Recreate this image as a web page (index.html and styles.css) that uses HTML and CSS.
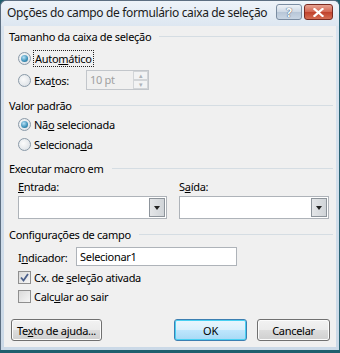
FILE: index.html
```html
<!DOCTYPE html>
<html lang="pt">
<head>
  <meta charset="UTF-8" />
  <title>Opções do campo de formulário caixa de seleção</title>
  <link rel="stylesheet" href="styles.css">
</head>
<body>

  <div class="window">
    <div class="titlebar">
      <span class="title">Opções do campo de formulário caixa de seleção</span>
      <div class="caption">
        <span class="cap-btn help">?</span>
        <span class="cap-btn close">
          <svg width="11" height="9" viewBox="0 0 11 9"><path d="M1.5 1 L9.5 8 M9.5 1 L1.5 8" stroke="#fff" stroke-width="2.2" stroke-linecap="square"/></svg>
        </span>
      </div>
    </div>

    <div class="client">
      <div class="group-head h1"><span>Tamanho da caixa de seleção</span><i></i></div>
      <div class="row opt r1"><span class="radio on"></span><span class="focus">Auto<u>m</u>ático</span></div>
      <div class="row opt r2">
        <span class="radio"></span><span class="lbl-exatos">Exa<u>t</u>os:</span>
        <div class="spin"><span class="spin-val">10 pt</span><div class="spin-btns"><b>&#9652;</b><b>&#9662;</b></div></div>
      </div>

      <div class="group-head h2"><span>Valor padrão</span><i></i></div>
      <div class="row opt r3"><span class="radio on"></span><span>Nã<u>o</u> selecionada</span></div>
      <div class="row opt r4"><span class="radio"></span><span>Seleciona<u>d</u>a</span></div>

      <div class="group-head h3"><span>Executar macro em</span><i></i></div>
      <div class="macro">
        <div class="macro-col entrada">
          <span class="small-lbl"><u>E</u>ntrada:</span>
          <div class="combo"><span class="combo-arrow"></span></div>
        </div>
        <div class="macro-col saida">
          <span class="small-lbl">S<u>a</u>ída:</span>
          <div class="combo"><span class="combo-arrow"></span></div>
        </div>
      </div>

      <div class="group-head h4"><span>Configurações de campo</span><i></i></div>
      <div class="row indic"><span class="indic-lbl">I<u>n</u>dicador:</span><div class="textbox">Selecionar1</div></div>
      <div class="row opt c1"><span class="check on">
        <svg width="9" height="9" viewBox="0 0 9 9"><path d="M1 4.5 L3.5 7.5 L8 1" fill="none" stroke="#4a5f8a" stroke-width="1.8"/></svg>
      </span><span>Cx. de <u>s</u>eleção ativada</span></div>
      <div class="row opt c2"><span class="check"></span><span>Calc<u>u</u>lar ao sair</span></div>

      <div class="buttons">
        <button class="btn help-text">Te<u>x</u>to de ajuda...</button>
        <div class="btn-right">
          <button class="btn ok">OK</button>
          <button class="btn">Cancelar</button>
        </div>
      </div>
    </div>
  </div>

</body>
</html>
```

FILE: styles.css
```css
body {
  margin: 0;
  padding: 0;
  background: #1f5f6e;
  font-family: "Noto Sans", "DejaVu Sans", sans-serif;
  font-size: 11px;
  letter-spacing: -0.3px;
  color: #000;
}

u {
  text-decoration: underline;
  text-underline-offset: 1px;
}

.window {
  width: 340px;
  height: 350px;
  box-sizing: border-box;
  border: 1px solid #5d6f82;
  border-right-color: #2a6273;
  border-bottom: none;
  border-radius: 6px 6px 0 0;
  background: linear-gradient(#dbe5f0, #cbd9e7);
  padding: 0 3px 3px 3px;
  display: flex;
  flex-direction: column;
}

.titlebar {
  height: 25px;
  display: flex;
  align-items: flex-start;
  justify-content: space-between;
  background: linear-gradient(#eef3f9, #dde7f1);
  margin: 0 -3px;
  padding: 0 3px;
  border-radius: 6px 6px 0 0;
}

.title {
  margin-top: 3px;
  margin-left: 3px;
  font-size: 12px;
  letter-spacing: -0.35px;
  color: #1b1b1b;
  white-space: nowrap;
}

.caption {
  display: flex;
  gap: 2px;
  margin-top: 3px;
  margin-right: 3px;
}

.cap-btn {
  height: 14px;
  border: 1px solid #7b8da2;
  border-radius: 3px;
  display: flex;
  align-items: center;
  justify-content: center;
}

.help {
  width: 24px;
  background: linear-gradient(#eef2f7, #cdd8e5 50%, #b7c6d7 51%, #c9d6e4);
  color: #fff;
  font-weight: bold;
  font-size: 12px;
  letter-spacing: 0;
  text-shadow: 0 0 1px #44556a, 0 0 1px #44556a;
}

.close {
  width: 27px;
  border-color: #7a2a21;
  background: linear-gradient(#e8a393, #d26551 50%, #c0412c 51%, #d56e54);
}

.client {
  flex: 1;
  background: #f0f0f0;
  padding: 0 3px 0 5px;
  display: flex;
  flex-direction: column;
}

.group-head {
  height: 20px;
  display: flex;
  align-items: center;
  gap: 8px;
  flex-shrink: 0;
}

.group-head i {
  flex: 1;
  height: 1px;
  background: #d5dde3;
}

.h2 { margin-top: 5px; }
.h3 { margin-top: 4px; }
.h4 { margin-top: 5px; }

.row {
  display: flex;
  align-items: center;
  flex-shrink: 0;
}

.opt {
  height: 20px;
  padding-left: 9px;
}

.r1 { margin-top: 2px; }
.r2 { margin-top: 2px; }
.r3 { height: 19px; }
.r4 { height: 19px; margin-top: 1px; }
.c1 { height: 19px; margin-top: 2px; }
.c2 { height: 19px; }

.radio {
  width: 11px;
  height: 11px;
  border: 1px solid #8a9aa8;
  border-radius: 50%;
  background: radial-gradient(circle at 40% 40%, #fbfbfb, #d6dce2);
  margin-right: 3px;
  display: flex;
  align-items: center;
  justify-content: center;
  box-sizing: content-box;
}

.radio.on::after {
  content: "";
  width: 7px;
  height: 7px;
  border-radius: 50%;
  background: radial-gradient(circle at 40% 35%, #b9e2f6, #3a8fb8 60%, #20627f);
}

.check {
  width: 11px;
  height: 11px;
  border: 1px solid #8f8f8f;
  background: linear-gradient(135deg, #dadada, #f6f6f6);
  margin-right: 3px;
  display: flex;
  align-items: center;
  justify-content: center;
}

.focus {
  outline: 1px dotted #222;
  outline-offset: 0;
  padding: 0 1px;
  line-height: 15px;
}

.lbl-exatos {
  width: 52px;
}

.spin {
  width: 61px;
  height: 18px;
  border: 1px solid #c2c6cb;
  background: #f0f0f0;
  display: flex;
  justify-content: space-between;
}

.spin-val {
  color: #a0a0a0;
  padding: 1px 0 0 3px;
}

.spin-btns {
  width: 15px;
  display: flex;
  flex-direction: column;
}

.spin-btns b {
  flex: 1;
  border: 1px solid #d2d5d8;
  background: #f2f3f4;
  font-size: 7px;
  color: #aeb4ba;
  line-height: 7px;
  text-align: center;
  font-weight: normal;
}

.macro {
  display: flex;
  gap: 12px;
  padding-left: 9px;
  margin-top: 2px;
}

.macro-col {
  display: flex;
  flex-direction: column;
}

.entrada { width: 149px; }
.saida { width: 150px; }

.small-lbl {
  height: 14px;
  line-height: 14px;
}

.combo {
  margin-top: 2px;
  height: 19px;
  border: 1px solid #aeb3b9;
  background: #fff;
  display: flex;
  justify-content: flex-end;
  padding: 1px;
}

.combo-arrow {
  width: 14px;
  border: 1px solid #8d949b;
  background: linear-gradient(90deg, #e4e6e8, #d0d4d8);
  display: flex;
  align-items: center;
  justify-content: center;
}

.combo-arrow::after {
  content: "";
  border-left: 3px solid transparent;
  border-right: 3px solid transparent;
  border-top: 4px solid #222;
}

.indic {
  height: 19px;
  margin-top: 3px;
  padding-left: 9px;
}

.indic-lbl {
  width: 58px;
  padding-top: 1px;
}

.textbox {
  width: 156px;
  height: 17px;
  border: 1px solid #aeb3b9;
  background: #fff;
  padding-left: 3px;
  line-height: 17px;
}

.buttons {
  display: flex;
  justify-content: space-between;
  margin-top: 13px;
  padding: 0 3px 0 2px;
}

.btn-right {
  display: flex;
  gap: 10px;
}

.btn {
  height: 22px;
  width: 73px;
  font-family: inherit;
  font-size: 11px;
  letter-spacing: -0.3px;
  white-space: nowrap;
  color: #000;
  border: 1px solid #707070;
  border-radius: 3px;
  background: linear-gradient(#f2f2f2, #ebebeb 50%, #dddddd 51%, #cfcfcf);
  box-shadow: inset 0 0 0 1px #fcfcfc;
  padding: 0;
}

.help-text {
  width: 91px;
}

.ok {
  border-color: #3c7fb1;
  box-shadow: inset 0 0 0 1px #48d0f2;
  background: linear-gradient(#eaf6fd, #d9f0fc 50%, #bee6fd 51%, #a7d9f5);
}
```
